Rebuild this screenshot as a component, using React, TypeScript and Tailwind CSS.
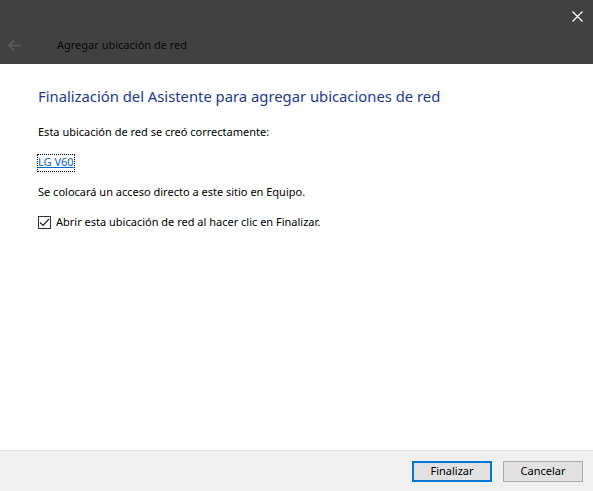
import React from 'react';

const font = { fontFamily: '"Segoe UI", "Noto Sans", "Liberation Sans", sans-serif' };

function TitleBar() {
  return (
    <div className="h-[64px] bg-[#414141] relative shrink-0">
      <button className="absolute right-[8px] top-[8px] w-[16px] h-[16px] flex items-center justify-center" title="Cerrar">
        <svg width="11" height="11" viewBox="0 0 11 11">
          <path d="M0.5 0.5 L10.5 10.5 M10.5 0.5 L0.5 10.5" stroke="#ffffff" strokeWidth="1.2" />
        </svg>
      </button>
      <div className="absolute left-0 bottom-[4px] h-[30px] w-full flex items-center">
        <div className="w-[57px] pl-[8px] flex items-center">
          <svg width="13" height="11" viewBox="0 0 13 11">
            <path d="M6 0.5 L1 5.5 L6 10.5 M1 5.5 L13 5.5" stroke="#5c5c5c" strokeWidth="1.6" fill="none" />
          </svg>
        </div>
        <span className="text-[11px] text-[#0a0a0a]">Agregar ubicación de red</span>
      </div>
    </div>
  );
}

function Checkbox() {
  return (
    <span className="w-[13px] h-[13px] border border-[#333333] bg-white flex items-center justify-center">
      <svg width="11" height="9" viewBox="0 0 11 9">
        <path d="M1 4.5 L4 7.5 L10 1" stroke="#222222" strokeWidth="1.2" fill="none" />
      </svg>
    </span>
  );
}

export default function App() {
  return (
    <div className="w-[593px] h-[491px] flex flex-col bg-white" style={font}>
      <TitleBar />
      <div className="flex-1 pl-[38px] pt-[21px]">
        <h1 className="text-[14.8px] leading-[22px] text-[#1c3a94] font-normal">
          Finalización del Asistente para agregar ubicaciones de red
        </h1>
        <p className="mt-[17px] text-[11px] leading-[16px] text-black">Esta ubicación de red se creó correctamente:</p>
        <div className="mt-[15px] h-[16px] flex">
          <a className="text-[11px] leading-[14px] text-[#0066cc] underline outline-1 outline-dotted outline-black">LG V60</a>
        </div>
        <p className="mt-[13px] text-[11px] leading-[16px] text-black">Se colocará un acceso directo a este sitio en Equipo.</p>
        <label className="mt-[14px] flex items-center gap-[5px] text-[11px] leading-[16px] text-black">
          <Checkbox />
          Abrir esta ubicación de red al hacer clic en Finalizar.
        </label>
      </div>
      <div className="h-[41px] bg-[#f0f0f0] border-t border-[#dfdfdf] flex items-center justify-end gap-[11px] pr-[10px] shrink-0">
        <button className="w-[80px] h-[21px] bg-[#e1e1e1] border-2 border-[#0078d7] text-[11px] text-black flex items-center justify-center">
          Finalizar
        </button>
        <button className="w-[80px] h-[21px] bg-[#e1e1e1] border border-[#adadad] text-[11px] text-black flex items-center justify-center">
          Cancelar
        </button>
      </div>
    </div>
  );
}
